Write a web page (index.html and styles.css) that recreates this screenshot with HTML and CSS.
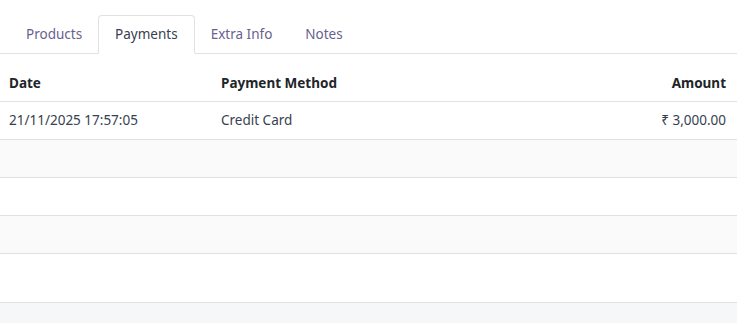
FILE: index.html
```html
<!DOCTYPE html>
<html lang="en">
<head>
<meta charset="utf-8">
<link rel="stylesheet" href="styles.css">
</head>
<body>
<div class="sheet">
  <ul class="tabs">
    <li class="tab">Products</li>
    <li class="tab active">Payments</li>
    <li class="tab">Extra Info</li>
    <li class="tab">Notes</li>
  </ul>
  <table class="list">
    <colgroup>
      <col class="c-date">
      <col class="c-method">
      <col class="c-amount">
    </colgroup>
    <thead>
      <tr class="head-row">
        <th>Date</th>
        <th>Payment Method</th>
        <th class="right">Amount</th>
      </tr>
    </thead>
    <tbody>
      <tr class="row">
        <td>21/11/2025 17:57:05</td>
        <td>Credit Card</td>
        <td class="right">₹ 3,000.00</td>
      </tr>
      <tr class="row odd"><td></td><td></td><td></td></tr>
      <tr class="row"><td></td><td></td><td></td></tr>
      <tr class="row odd"><td></td><td></td><td></td></tr>
      <tr class="row last"><td></td><td></td><td></td></tr>
    </tbody>
  </table>
</div>
</body>
</html>
```
FILE: styles.css
```css
html, body {
  margin: 0;
  padding: 0;
  background: #f6f7f9;
  font-family: "Noto Sans", "Open Sans", sans-serif;
  font-size: 13.5px;
  color: #374151;
}
.sheet {
  background: #ffffff;
}
.tabs {
  list-style: none;
  margin: 0;
  padding: 15px 0 0 9px;
  display: flex;
  border-bottom: 1px solid #dee2e6;
}
.tab {
  box-sizing: border-box;
  height: 39px;
  padding: 0 16px 1px 16px;
  display: flex;
  align-items: center;
  color: #6a5f8f;
  border: 1px solid transparent;
  border-radius: 4px 4px 0 0;
  margin-bottom: -1px;
}
.tab + .tab { margin-left: -1px; }
.tab.active {
  color: #374151;
  border-color: #dee2e6;
  border-bottom-color: #ffffff;
  background: #ffffff;
}
.list {
  width: 100%;
  border-collapse: collapse;
  table-layout: fixed;
}
.c-date { width: 212px; }
.c-amount { width: 260px; }
.list th, .list td {
  padding: 0 11px 0 9px;
  text-align: left;
  border-bottom: 1px solid #dee2e6;
  white-space: nowrap;
}
.list th {
  height: 47px;
  padding-top: 11px;
  box-sizing: border-box;
  font-weight: 700;
  color: #212529;
}
.list .right { text-align: right; }
.row td { height: 37px; }
.row.odd td { background: #fafafa; }
.row.last td { height: 48px; }
```
